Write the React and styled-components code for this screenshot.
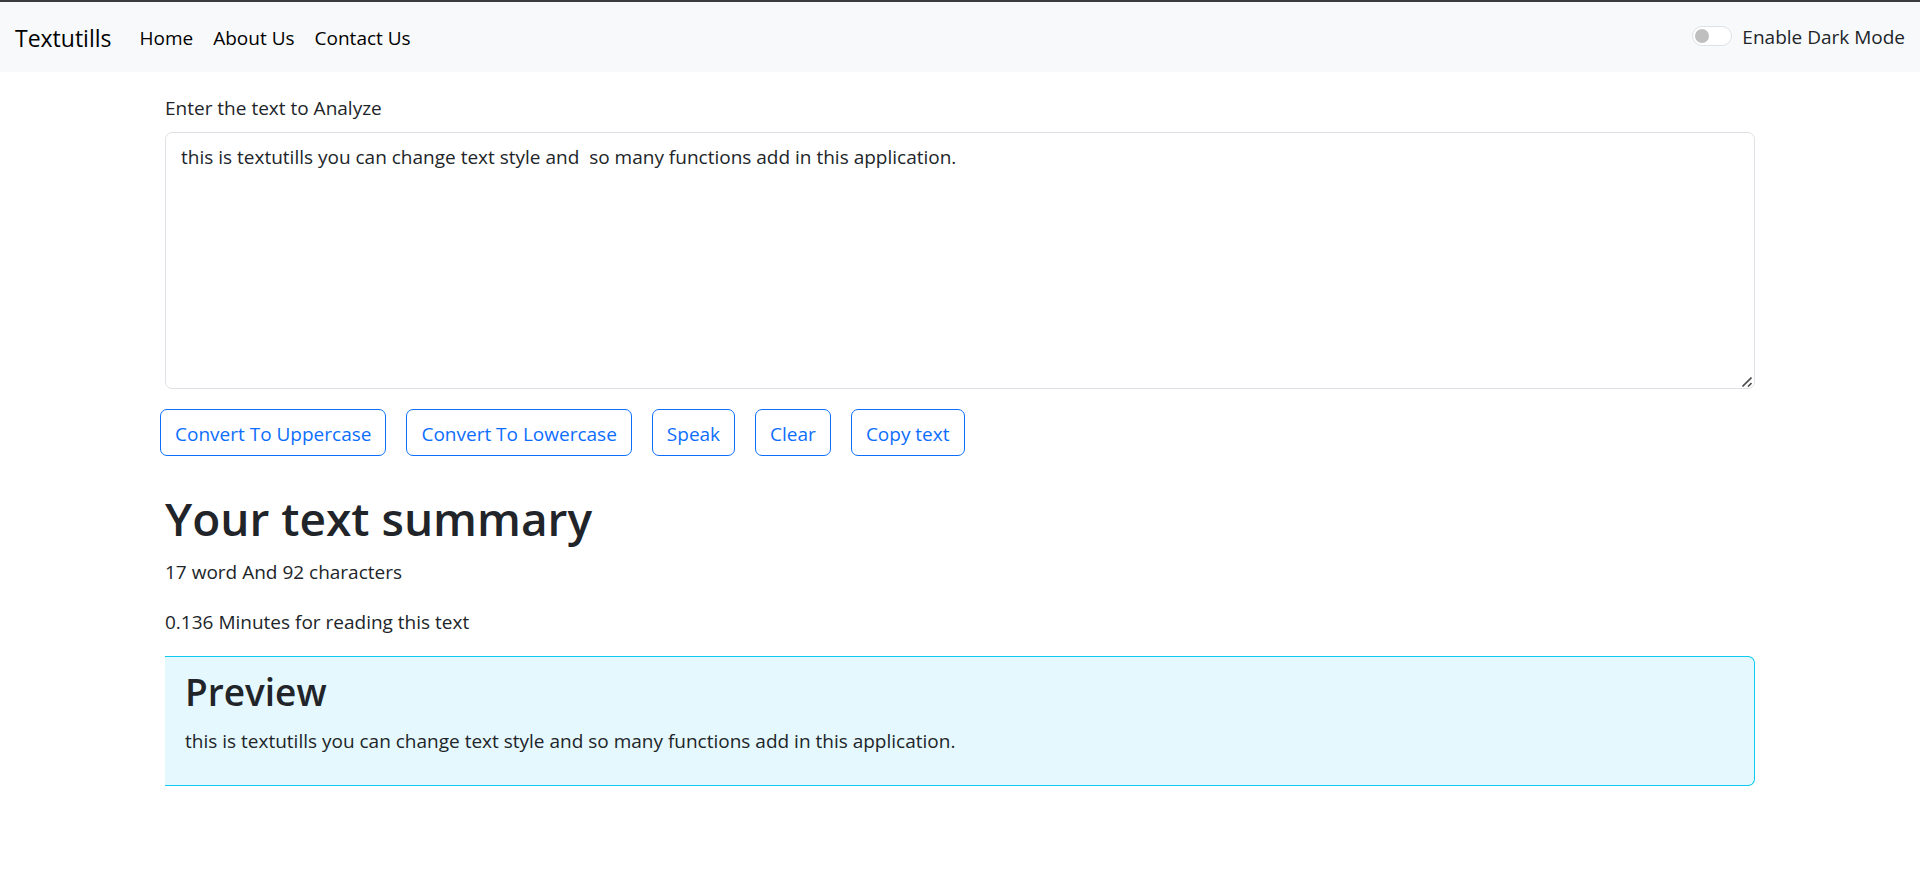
import React, { useState } from "react";
import styled, { createGlobalStyle, ThemeProvider } from "styled-components";

const lightTheme = {
  page: "#ffffff",
  nav: "#f8f9fb",
  brand: "#000000",
  text: "#212529",
  border: "#dee2e6",
  field: "#ffffff",
  preview: "#e5f8fd",
};

const darkTheme = {
  page: "#212529",
  nav: "#2b3035",
  brand: "#ffffff",
  text: "#f8f9fa",
  border: "#495057",
  field: "#2b3035",
  preview: "#0b3a44",
};

const GlobalStyle = createGlobalStyle`
  *, *::before, *::after { box-sizing: border-box; }
  body {
    margin: 0;
    background: ${({ theme }) => theme.page};
    color: ${({ theme }) => theme.text};
    font-family: "Segoe UI", "Open Sans", "Noto Sans", sans-serif;
    font-size: 19px;
    line-height: 30px;
  }
`;

const Navbar = styled.nav`
  display: flex;
  align-items: center;
  justify-content: space-between;
  min-height: 72px;
  padding: 0 15px;
  border-top: 2px solid #3c3b3e;
  background: ${({ theme }) => theme.nav};
`;

const NavGroup = styled.div`
  display: flex;
  align-items: center;
  gap: 28px;
  padding-top: 2px;
`;

const Brand = styled.a`
  color: ${({ theme }) => theme.brand};
  font-size: 23px;
  line-height: 38px;
  text-decoration: none;
`;

const NavList = styled.ul`
  display: flex;
  gap: 20px;
  margin: 0;
  padding: 0;
  list-style: none;
`;

const NavLink = styled.a`
  color: ${({ theme }) => theme.brand};
  text-decoration: none;
`;

const SwitchLabel = styled.label`
  display: flex;
  align-items: center;
  gap: 10px;
  cursor: pointer;
`;

const Switch = styled.input`
  appearance: none;
  display: flex;
  align-items: center;
  width: 40px;
  height: 20px;
  margin: 0 0 2px;
  padding: 0 2px;
  border: 1px solid ${({ theme }) => theme.border};
  border-radius: 10px;
  background: ${({ theme }) => theme.field};
  cursor: pointer;

  &::before {
    content: "";
    width: 14px;
    height: 14px;
    border-radius: 50%;
    background: #bfbfbf;
  }

  &:checked {
    justify-content: flex-end;
    border-color: #0d6efd;
    background: #0d6efd;
  }

  &:checked::before {
    background: #ffffff;
  }
`;

const Container = styled.main`
  max-width: 1650px;
  margin: 0 auto;
  padding: 21px 30px;
`;

const FieldLabel = styled.label`
  display: block;
  margin-bottom: 9px;
`;

const TextField = styled.div`
  position: relative;
`;

const TextBox = styled.textarea`
  display: block;
  width: 100%;
  padding: 9px 15px 6px;
  border: 1px solid ${({ theme }) => theme.border};
  border-radius: 7px;
  background: ${({ theme }) => theme.field};
  color: inherit;
  font: inherit;
  resize: vertical;

  &::-webkit-resizer {
    background: transparent;
  }
`;

const ResizeGrip = styled.svg`
  position: absolute;
  right: 3px;
  bottom: 2px;
  width: 10px;
  height: 10px;
  pointer-events: none;
`;

const ButtonRow = styled.div`
  display: flex;
  flex-wrap: wrap;
  gap: 20px;
  margin: 20px -5px 32px;
`;

const OutlineButton = styled.button`
  padding: 9px 14px 6px;
  border: 1px solid #0d6efd;
  border-radius: 7px;
  background: transparent;
  color: #0d6efd;
  font: inherit;
  cursor: pointer;

  &:hover {
    background: #0d6efd;
    color: #ffffff;
  }
`;

const SummaryTitle = styled.h1`
  margin: 0 0 8px;
  font-size: 46px;
  font-weight: 600;
  line-height: 60px;
`;

const Paragraph = styled.p`
  margin: 0 0 19px;
  padding-top: 1px;
`;

const PreviewPanel = styled.section`
  padding: 11px 20px 10px;
  border: 1px solid #0dcaf0;
  border-left: 0;
  border-radius: 0 7px 7px 0;
  background: ${({ theme }) => theme.preview};
`;

const PreviewTitle = styled.h2`
  margin: 0 0 9px;
  font-size: 37px;
  font-weight: 600;
  line-height: 48px;
`;

const initialText =
  "this is textutills you can change text style and  so many functions add in this application.";

const navLinks = ["Home", "About Us", "Contact Us"];

export default function App() {
  const [text, setText] = useState(initialText);
  const [dark, setDark] = useState(false);
  const words = text === "" ? 0 : text.split(" ").length;

  const actions = [
    { label: "Convert To Uppercase", run: () => setText(text.toUpperCase()) },
    { label: "Convert To Lowercase", run: () => setText(text.toLowerCase()) },
    {
      label: "Speak",
      run: () => window.speechSynthesis?.speak(new SpeechSynthesisUtterance(text)),
    },
    { label: "Clear", run: () => setText("") },
    { label: "Copy text", run: () => navigator.clipboard?.writeText(text) },
  ];

  return (
    <ThemeProvider theme={dark ? darkTheme : lightTheme}>
      <GlobalStyle />
      <Navbar>
        <NavGroup>
          <Brand href="#">Textutills</Brand>
          <NavList>
            {navLinks.map((name) => (
              <li key={name}>
                <NavLink href="#">{name}</NavLink>
              </li>
            ))}
          </NavList>
        </NavGroup>
        <SwitchLabel htmlFor="dark-mode">
          <Switch
            id="dark-mode"
            type="checkbox"
            role="switch"
            checked={dark}
            onChange={(e) => setDark(e.target.checked)}
          />
          Enable Dark Mode
        </SwitchLabel>
      </Navbar>
      <Container>
        <FieldLabel htmlFor="text">Enter the text to Analyze</FieldLabel>
        <TextField>
          <TextBox
            id="text"
            rows={8}
            spellCheck={false}
            value={text}
            onChange={(e) => setText(e.target.value)}
          />
          <ResizeGrip viewBox="0 0 10 10" aria-hidden="true">
            <path d="M0.5 9.5 9.5 0.5M6 9.5 9.5 6" fill="none" stroke="#4d4d4d" strokeWidth="1.6" />
          </ResizeGrip>
        </TextField>
        <ButtonRow>
          {actions.map(({ label, run }) => (
            <OutlineButton key={label} type="button" onClick={run}>
              {label}
            </OutlineButton>
          ))}
        </ButtonRow>
        <SummaryTitle>Your text summary</SummaryTitle>
        <Paragraph>
          {words} word And {text.length} characters
        </Paragraph>
        <Paragraph>{(0.008 * words).toFixed(3)} Minutes for reading this text</Paragraph>
        <PreviewPanel>
          <PreviewTitle>Preview</PreviewTitle>
          <Paragraph>{text}</Paragraph>
        </PreviewPanel>
      </Container>
    </ThemeProvider>
  );
}
